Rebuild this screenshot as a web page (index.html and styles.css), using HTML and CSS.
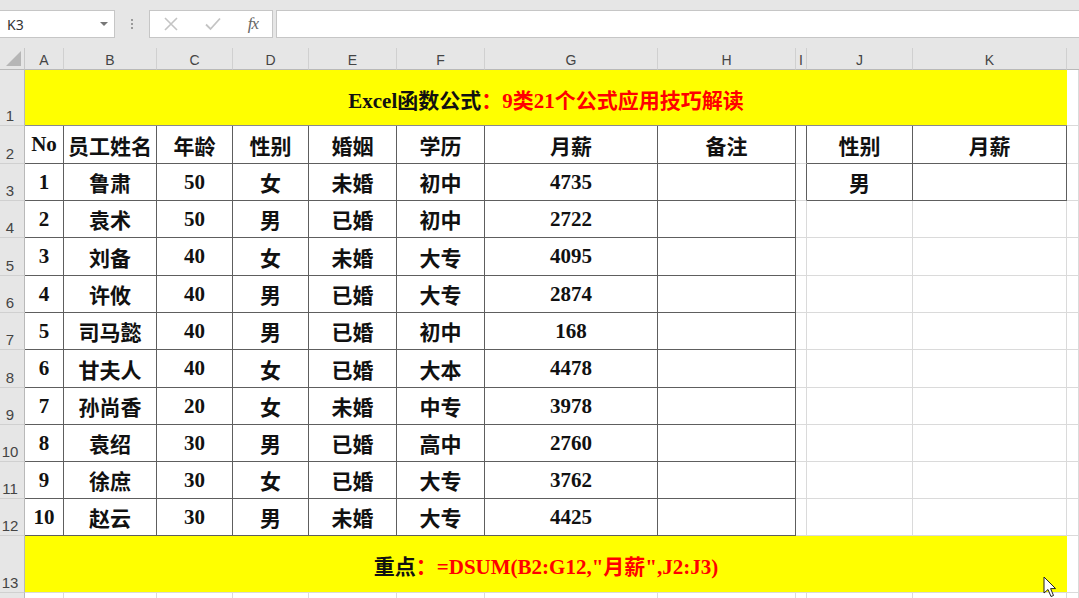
FILE: index.html
```html
<!DOCTYPE html>
<html lang="zh">
<head>
<meta charset="utf-8">
<title>Excel DSUM</title>
<link rel="stylesheet" href="styles.css">
</head>
<body>
<div class="app">
  <div class="toolbar">
    <div class="namebox"><span class="ref">K3</span><span class="caret"></span></div>
    <div class="grip"><i></i><i></i><i></i></div>
    <div class="fxbox">
      <svg class="btn" width="14" height="14" viewBox="0 0 14 14"><path d="M1 1L13 13M13 1L1 13" stroke="#c4c4c4" stroke-width="1.6" fill="none"/></svg>
      <svg class="btn" width="16" height="14" viewBox="0 0 16 14"><path d="M1 7.5L5.5 12L15 1.5" stroke="#c4c4c4" stroke-width="1.8" fill="none"/></svg>
      <span class="fx">fx</span>
    </div>
    <div class="formula"></div>
  </div>

  <div class="sheet">
    <!-- column headers -->
    <div class="corner"><span class="tri"></span></div>
    <div class="ch">A</div><div class="ch">B</div><div class="ch">C</div><div class="ch">D</div>
    <div class="ch">E</div><div class="ch">F</div><div class="ch">G</div><div class="ch">H</div>
    <div class="ch">I</div><div class="ch">J</div><div class="ch">K</div><div class="ch last"></div>

    <!-- row 1 -->
    <div class="rh">1</div>
    <div class="banner"><span class="blk"><b class="lat">Excel</b>函数公式</span><span class="red">：9类21个公式应用技巧解读</span></div>
    <div class="c"></div>

    <!-- row 2 -->
    <div class="rh">2</div>
    <div class="t">No</div><div class="t">员工姓名</div><div class="t">年龄</div><div class="t">性别</div>
    <div class="t">婚姻</div><div class="t">学历</div><div class="t">月薪</div><div class="t">备注</div>
    <div class="c gap"></div><div class="t">性别</div><div class="t">月薪</div><div class="c"></div>

    <!-- row 3 -->
    <div class="rh">3</div>
    <div class="t">1</div><div class="t">鲁肃</div><div class="t">50</div><div class="t">女</div>
    <div class="t">未婚</div><div class="t">初中</div><div class="t">4735</div><div class="t"></div>
    <div class="c gap"></div><div class="t">男</div><div class="t"></div><div class="c"></div>

    <!-- row 4 -->
    <div class="rh">4</div>
    <div class="t">2</div><div class="t">袁术</div><div class="t">50</div><div class="t">男</div>
    <div class="t">已婚</div><div class="t">初中</div><div class="t">2722</div><div class="t"></div>
    <div class="c"></div><div class="c"></div><div class="c"></div><div class="c"></div>

    <!-- row 5 -->
    <div class="rh">5</div>
    <div class="t">3</div><div class="t">刘备</div><div class="t">40</div><div class="t">女</div>
    <div class="t">未婚</div><div class="t">大专</div><div class="t">4095</div><div class="t"></div>
    <div class="c"></div><div class="c"></div><div class="c"></div><div class="c"></div>

    <!-- row 6 -->
    <div class="rh">6</div>
    <div class="t">4</div><div class="t">许攸</div><div class="t">40</div><div class="t">男</div>
    <div class="t">已婚</div><div class="t">大专</div><div class="t">2874</div><div class="t"></div>
    <div class="c"></div><div class="c"></div><div class="c"></div><div class="c"></div>

    <!-- row 7 -->
    <div class="rh">7</div>
    <div class="t">5</div><div class="t">司马懿</div><div class="t">40</div><div class="t">男</div>
    <div class="t">已婚</div><div class="t">初中</div><div class="t">168</div><div class="t"></div>
    <div class="c"></div><div class="c"></div><div class="c"></div><div class="c"></div>

    <!-- row 8 -->
    <div class="rh">8</div>
    <div class="t">6</div><div class="t">甘夫人</div><div class="t">40</div><div class="t">女</div>
    <div class="t">已婚</div><div class="t">大本</div><div class="t">4478</div><div class="t"></div>
    <div class="c"></div><div class="c"></div><div class="c"></div><div class="c"></div>

    <!-- row 9 -->
    <div class="rh">9</div>
    <div class="t">7</div><div class="t">孙尚香</div><div class="t">20</div><div class="t">女</div>
    <div class="t">未婚</div><div class="t">中专</div><div class="t">3978</div><div class="t"></div>
    <div class="c"></div><div class="c"></div><div class="c"></div><div class="c"></div>

    <!-- row 10 -->
    <div class="rh">10</div>
    <div class="t">8</div><div class="t">袁绍</div><div class="t">30</div><div class="t">男</div>
    <div class="t">已婚</div><div class="t">高中</div><div class="t">2760</div><div class="t"></div>
    <div class="c"></div><div class="c"></div><div class="c"></div><div class="c"></div>

    <!-- row 11 -->
    <div class="rh">11</div>
    <div class="t">9</div><div class="t">徐庶</div><div class="t">30</div><div class="t">女</div>
    <div class="t">已婚</div><div class="t">大专</div><div class="t">3762</div><div class="t"></div>
    <div class="c"></div><div class="c"></div><div class="c"></div><div class="c"></div>

    <!-- row 12 -->
    <div class="rh">12</div>
    <div class="t">10</div><div class="t">赵云</div><div class="t">30</div><div class="t">男</div>
    <div class="t">未婚</div><div class="t">大专</div><div class="t">4425</div><div class="t"></div>
    <div class="c"></div><div class="c"></div><div class="c"></div><div class="c"></div>

    <!-- row 13 -->
    <div class="rh">13</div>
    <div class="banner foot"><span class="blk">重点</span><span class="red">：=DSUM(B2:G12,"月薪",J2:J3)</span></div>
    <div class="c"></div>

    <!-- row 14 (only its top edge is visible) -->
    <div class="rh"></div>
    <div class="c"></div><div class="c"></div><div class="c"></div><div class="c"></div>
    <div class="c"></div><div class="c"></div><div class="c"></div><div class="c"></div>
    <div class="c"></div><div class="c"></div><div class="c"></div><div class="c"></div>
  </div>

  <svg class="cursor" width="14" height="22" viewBox="0 0 14 22"><path d="M1 1L1 17L5 13.5L8 20.5L10.5 19.5L7.6 12.6L12.6 12.6Z" fill="#fff" stroke="#222" stroke-width="1" stroke-linejoin="round"/></svg>
</div>
</body>
</html>
```

FILE: styles.css
```css
html, body {
  margin: 0;
  padding: 0;
}
body {
  width: 1079px;
  height: 598px;
  overflow: hidden;
  background: #e6e6e6;
}
.app {
  position: relative;
  width: 1079px;
  height: 598px;
  overflow: hidden;
}

/* toolbar */
.toolbar {
  height: 48px;
  box-sizing: border-box;
  padding-top: 10px;
  display: flex;
  align-items: flex-start;
  background: #e6e6e6;
}
.namebox {
  width: 115px;
  height: 28px;
  box-sizing: border-box;
  background: #fff;
  border: 1px solid #c6c6c6;
  border-left: none;
  display: flex;
  align-items: center;
  justify-content: space-between;
  padding: 0 6px 0 7px;
  font-family: "Noto Sans", "Liberation Sans", sans-serif;
  font-size: 14px;
  color: #333;
}
.caret {
  width: 0;
  height: 0;
  border-left: 4px solid transparent;
  border-right: 4px solid transparent;
  border-top: 4px solid #777;
}
.grip {
  width: 34px;
  height: 28px;
  display: flex;
  flex-direction: column;
  align-items: center;
  justify-content: center;
  gap: 2px;
}
.grip i {
  display: block;
  width: 2px;
  height: 2px;
  background: #9a9a9a;
}
.fxbox {
  width: 124px;
  height: 28px;
  box-sizing: border-box;
  background: #fff;
  border: 1px solid #c6c6c6;
  display: flex;
  align-items: center;
  justify-content: space-between;
  padding: 0 14px 0 14px;
}
.fx {
  font-family: "Liberation Serif", serif;
  font-style: italic;
  font-size: 17px;
  color: #666;
  letter-spacing: -1px;
}
.formula {
  flex: 1;
  margin-left: 3px;
  height: 28px;
  box-sizing: border-box;
  background: #fff;
  border: 1px solid #c6c6c6;
  border-right: none;
}

/* sheet grid */
.sheet {
  display: grid;
  grid-template-columns: 25px 39px 93px 76px 76px 88px 88px 173px 138px 11px 106px 154px 12px;
  grid-template-rows: 22px 56px 38px 37px 37px 38px 37px 37px 38px 37px 37px 37px 37px 57px 20px;
  background: #fff;
}
.corner, .ch {
  background: #e6e6e6;
  border-bottom: 1px solid #b9b9b9;
  box-sizing: border-box;
}
.corner {
  position: relative;
  border-right: 1px solid #c8c8c8;
}
.tri {
  position: absolute;
  right: 3px;
  bottom: 3px;
  width: 0;
  height: 0;
  border-left: 15px solid transparent;
  border-bottom: 15px solid #b6b6b6;
}
.ch {
  border-right: 1px solid #d0d0d0;
  display: flex;
  align-items: center;
  justify-content: center;
  font-family: "Liberation Sans", sans-serif;
  font-size: 14px;
  color: #444;
  padding-top: 2px;
}
.ch.last {
  border-right: none;
}
.rh {
  background: #e6e6e6;
  border-right: 1px solid #b9b9b9;
  border-bottom: 1px solid #d0d0d0;
  box-sizing: border-box;
  display: flex;
  align-items: flex-end;
  justify-content: center;
  padding: 0 4px 1px 0;
  font-family: "Liberation Sans", sans-serif;
  font-size: 15px;
  color: #444;
}
.c, .t {
  box-sizing: border-box;
  border-right: 1px solid #dadada;
  border-bottom: 1px solid #dadada;
}
.t {
  border-right-color: #5e5e5e;
  border-bottom-color: #5e5e5e;
  display: flex;
  align-items: center;
  justify-content: center;
  font-family: "Liberation Serif", "Noto Sans CJK SC", serif;
  font-weight: 700;
  font-size: 21px;
  color: #111;
  white-space: nowrap;
}
.c.gap {
  border-right-color: #5e5e5e;
}
.banner {
  grid-column: 2 / 13;
  background: #ffff00;
  box-sizing: border-box;
  border-bottom: 1px solid #8a8a8a;
  display: flex;
  align-items: center;
  justify-content: center;
  font-family: "Liberation Serif", "Noto Sans CJK SC", serif;
  font-weight: 700;
  font-size: 21px;
  white-space: nowrap;
  padding-top: 2px;
}
.banner.foot {
  border-bottom: 1px solid #dadada;
}
.blk {
  color: #111;
}
.lat {
  font-weight: 700;
}
.red {
  color: #ff0000;
}

.cursor {
  position: absolute;
  left: 1043px;
  top: 576px;
}
```
